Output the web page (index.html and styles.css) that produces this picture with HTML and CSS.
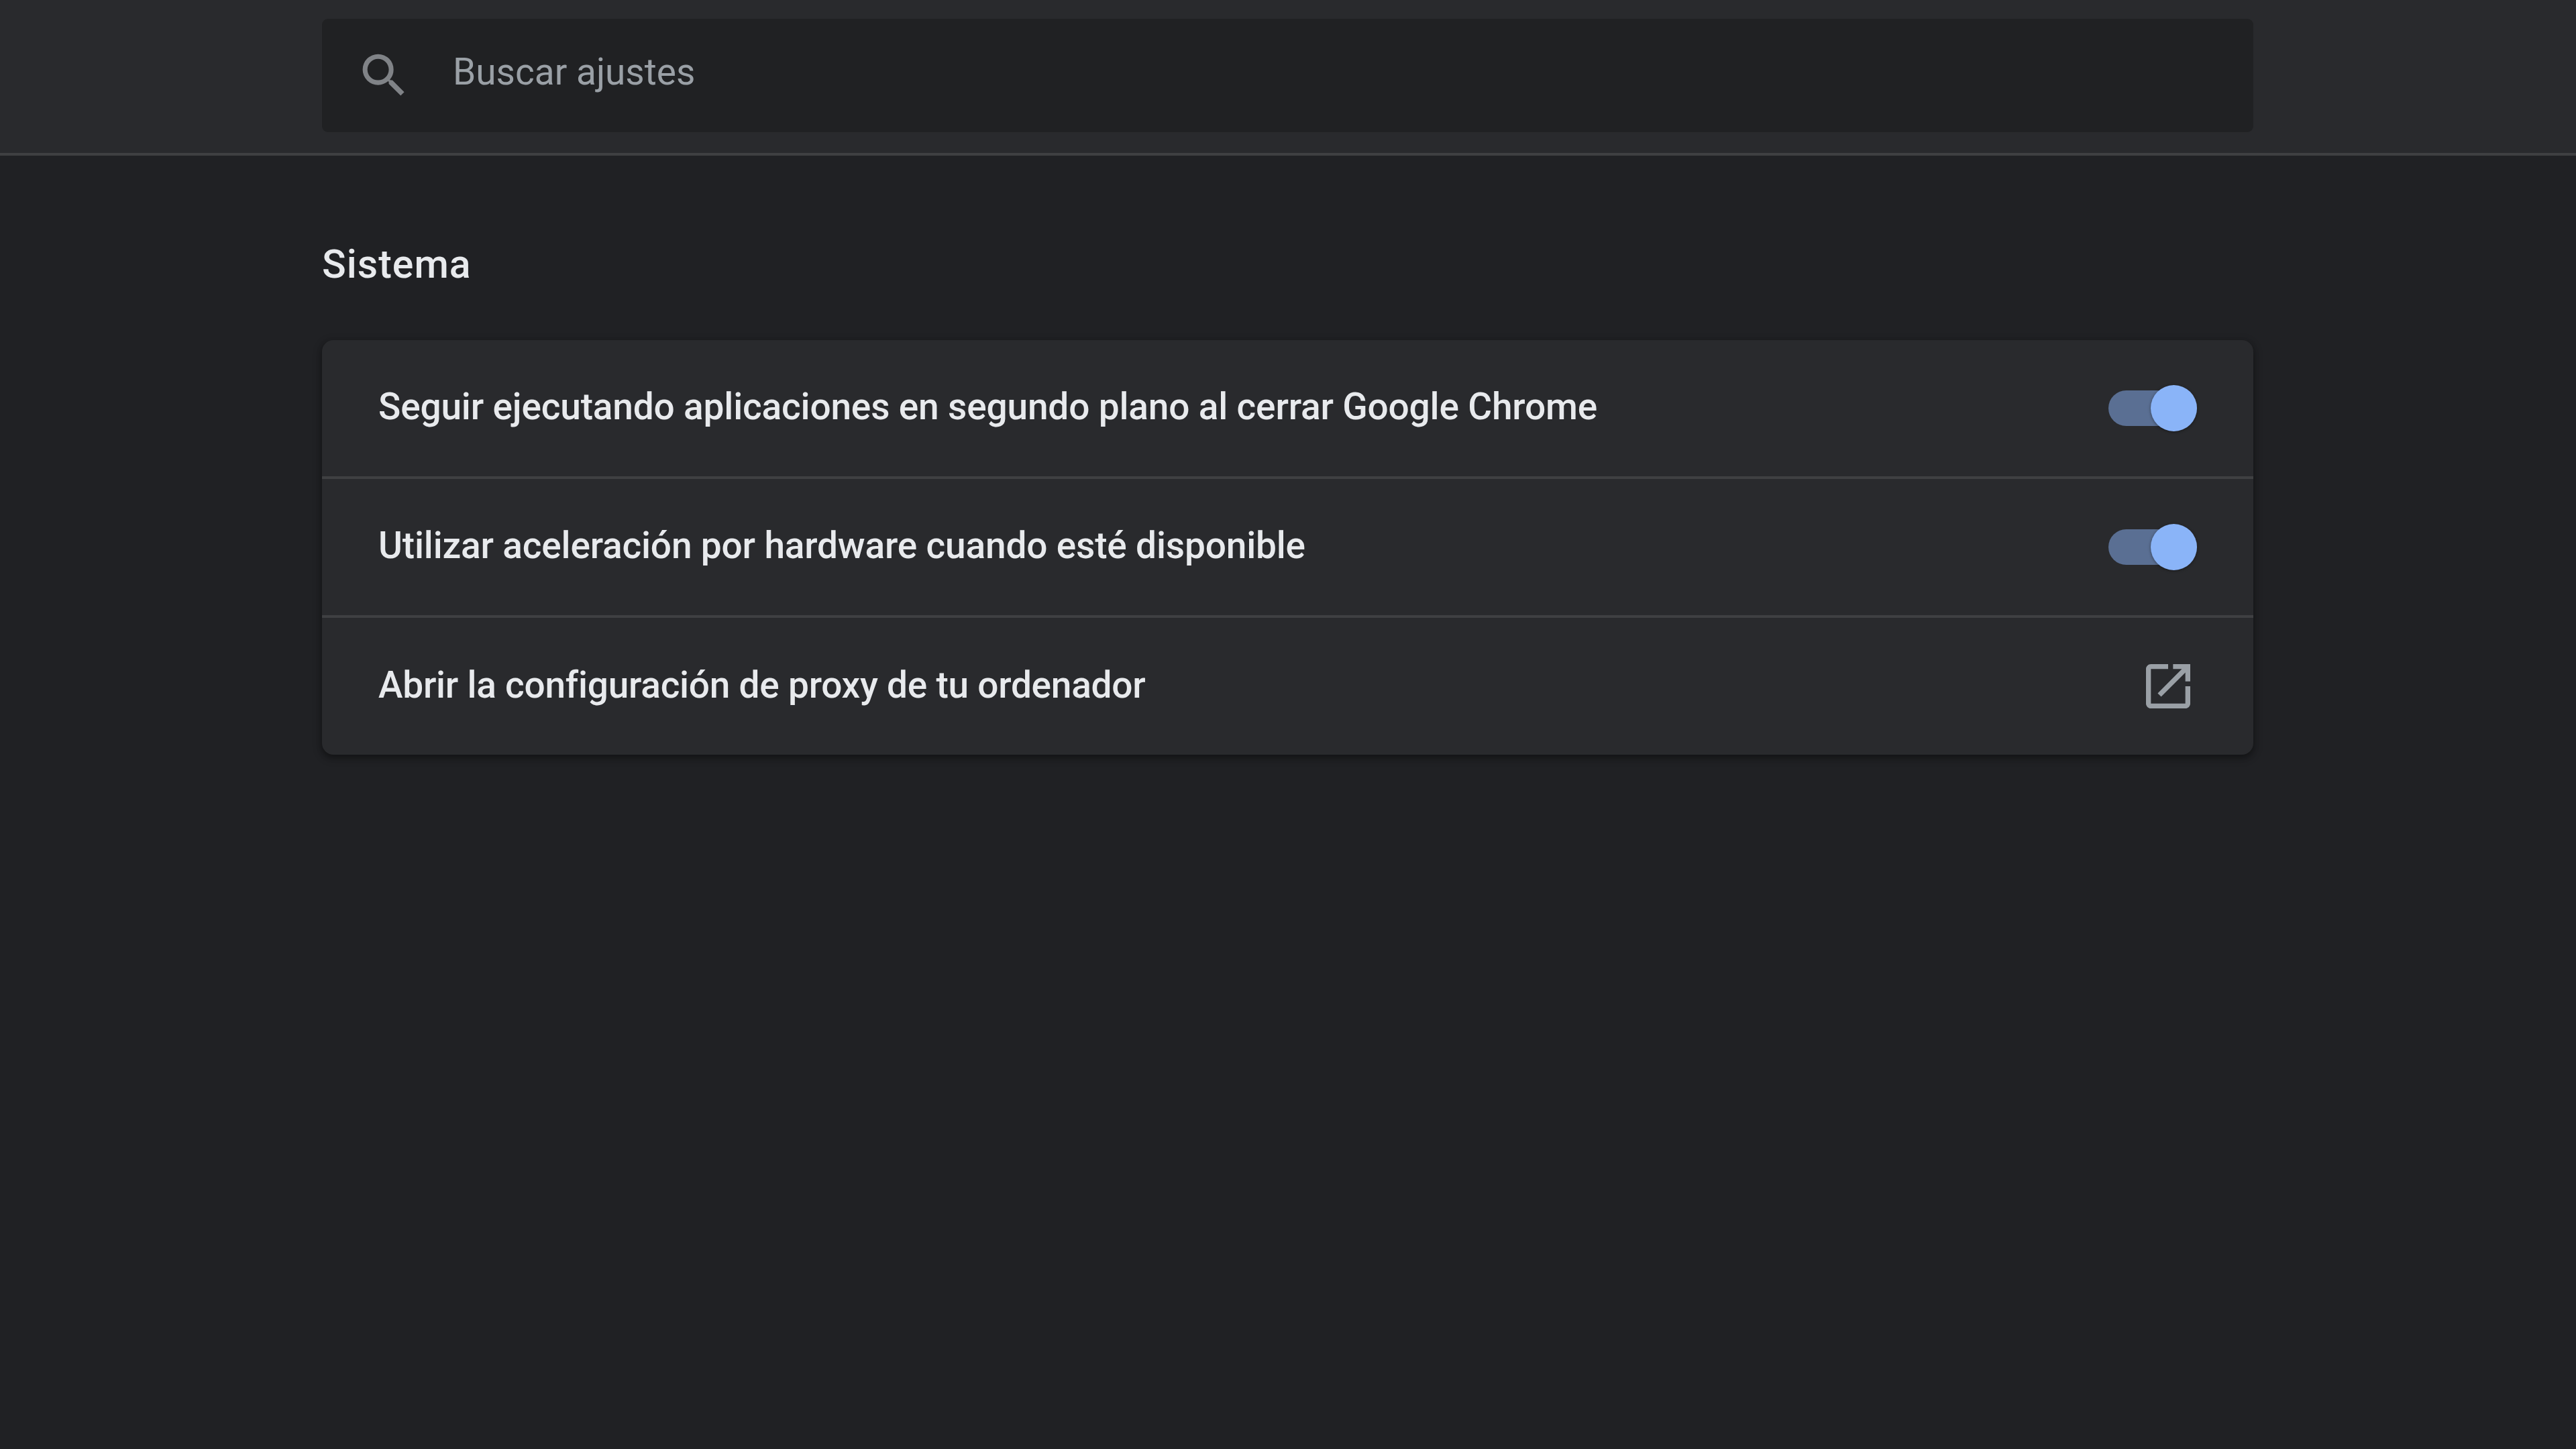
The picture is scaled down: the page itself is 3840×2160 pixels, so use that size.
FILE: index.html
```
<!DOCTYPE html>
<html lang="es">
<head>
    <meta charset="UTF-8">
    <title>Ajustes - Sistema</title>
    <link rel="stylesheet" href="styles.css">
</head>
<body>
    <header class="toolbar">
        <div class="search">
            <svg class="search-icon" viewBox="0 0 24 24">
                <path d="M15.5 14h-.79l-.28-.27A6.471 6.471 0 0 0 16 9.5 6.5 6.5 0 1 0 9.5 16c1.61 0 3.09-.59 4.23-1.57l.27.28v.79l5 4.99L20.49 19l-4.99-5zm-6 0C7.01 14 5 11.99 5 9.5S7.01 5 9.5 5 14 7.01 14 9.5 11.99 14 9.5 14z"/>
            </svg>
            <span class="search-text">Buscar ajustes</span>
        </div>
    </header>
    <main class="content">
        <h2 class="title">Sistema</h2>
        <div class="card">
            <div class="row">
                <span class="label">Seguir ejecutando aplicaciones en segundo plano al cerrar Google Chrome</span>
                <div class="toggle"><div class="knob"></div></div>
            </div>
            <div class="row">
                <span class="label">Utilizar aceleración por hardware cuando esté disponible</span>
                <div class="toggle"><div class="knob"></div></div>
            </div>
            <div class="row">
                <span class="label label-proxy">Abrir la configuración de proxy de tu ordenador</span>
                <svg class="open-icon" viewBox="0 0 24 24">
                    <path d="M19 19H5V5h7V3H5c-1.11 0-2 .9-2 2v14c0 1.1.89 2 2 2h14c1.1 0 2-.9 2-2v-7h-2v7zM14 3v2h3.59l-9.83 9.83 1.41 1.41L19 6.41V10h2V3h-7z"/>
                </svg>
            </div>
        </div>
    </main>
</body>
</html>
```
FILE: styles.css
```
* {
    box-sizing: border-box;
}
body {
    margin: 0;
    min-height: 2160px;
    background: #202124;
    color: #e8eaed;
    font-family: Roboto, sans-serif;
    font-size: 55px;
}
.toolbar {
    height: 232px;
    padding-top: 28px;
    background: #292a2d;
    border-bottom: 4px solid #3f4042;
}
.search {
    display: flex;
    align-items: center;
    width: 2879px;
    height: 169px;
    margin-left: 480px;
    padding-left: 50px;
    background: #202123;
    border-radius: 9px;
}
.search-icon {
    width: 85px;
    height: 85px;
    fill: #808387;
}
.search-text {
    margin: -11px 0 0 60px;
    color: #9aa0a6;
}
.content {
    width: 2879px;
    margin-left: 480px;
}
.title {
    margin: 0;
    padding-top: 127px;
    height: 275px;
    font-size: 59px;
    font-weight: 500;
    line-height: 70px;
    letter-spacing: 1px;
}
.card {
    background: #292a2d;
    border-radius: 17px;
    box-shadow: 0 4px 8px rgba(0, 0, 0, 0.3), 0 4px 12px 4px rgba(0, 0, 0, 0.15);
}
.row {
    display: flex;
    align-items: center;
    justify-content: space-between;
    height: 207px;
    padding: 0 84px;
    border-top: 4px solid #3f4042;
}
.row:first-child {
    height: 203px;
    border-top: none;
}
.row:last-child {
    height: 208px;
}
.label {
    font-weight: 500;
    letter-spacing: -0.17px;
    white-space: nowrap;
    margin-top: -5px;
}
.label-proxy {
    letter-spacing: -0.25px;
}
.toggle {
    display: flex;
    align-items: center;
    justify-content: flex-end;
    width: 132px;
    height: 53px;
    background: #5a6f93;
    border-radius: 27px;
}
.knob {
    width: 69px;
    height: 69px;
    background: #8ab4f8;
    border-radius: 50%;
    box-shadow: 0 1px 4px rgba(0, 0, 0, 0.4);
}
.open-icon {
    width: 88px;
    height: 88px;
    margin-right: -1px;
    fill: #9aa0a6;
}
```
